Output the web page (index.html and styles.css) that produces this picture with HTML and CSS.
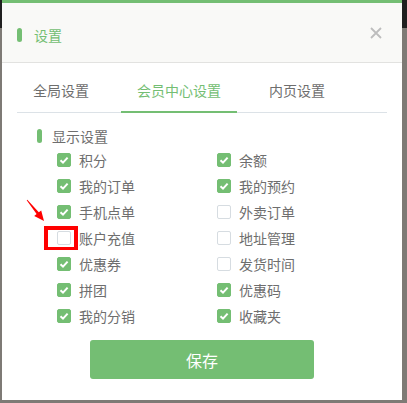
FILE: index.html
```html
<!DOCTYPE html>
<html lang="zh">
<head>
<meta charset="utf-8">
<link rel="stylesheet" href="styles.css">
</head>
<body>
<div class="dialog">
  <div class="header">
    <div class="title-group">
      <span class="pill"></span>
      <span class="title">设置</span>
    </div>
    <svg class="close" width="12" height="12" viewBox="0 0 12 12"><path d="M1 1L11 11M11 1L1 11" stroke="#bdbdbd" stroke-width="1.8" fill="none"/></svg>
  </div>
  <div class="content">
    <div class="tabs">
      <div class="tab">全局设置</div>
      <div class="tab active">会员中心设置</div>
      <div class="tab">内页设置</div>
    </div>
    <div class="section-title"><span class="pill small"></span><span>显示设置</span></div>
    <div class="grid">
      <div class="item"><span class="cb on"><svg viewBox="0 0 14 14"><path d="M3.5 7.2L6 9.6L10.6 4.6" stroke="#fff" stroke-width="2" fill="none"/></svg></span><span>积分</span></div>
      <div class="item"><span class="cb on"><svg viewBox="0 0 14 14"><path d="M3.5 7.2L6 9.6L10.6 4.6" stroke="#fff" stroke-width="2" fill="none"/></svg></span><span>余额</span></div>
      <div class="item"><span class="cb on"><svg viewBox="0 0 14 14"><path d="M3.5 7.2L6 9.6L10.6 4.6" stroke="#fff" stroke-width="2" fill="none"/></svg></span><span>我的订单</span></div>
      <div class="item"><span class="cb on"><svg viewBox="0 0 14 14"><path d="M3.5 7.2L6 9.6L10.6 4.6" stroke="#fff" stroke-width="2" fill="none"/></svg></span><span>我的预约</span></div>
      <div class="item"><span class="cb on"><svg viewBox="0 0 14 14"><path d="M3.5 7.2L6 9.6L10.6 4.6" stroke="#fff" stroke-width="2" fill="none"/></svg></span><span>手机点单</span></div>
      <div class="item"><span class="cb"></span><span>外卖订单</span></div>
      <div class="item"><span class="cb marked"><span class="redbox"></span><svg class="arrow" width="22" height="26" viewBox="0 0 22 26"><polygon points="2.3,1.75 13.8,14.3 16.2,12.4 19,23 9.2,18 11.6,16.1 1.7,2.25" fill="#f00"/></svg></span><span>账户充值</span></div>
      <div class="item"><span class="cb"></span><span>地址管理</span></div>
      <div class="item"><span class="cb on"><svg viewBox="0 0 14 14"><path d="M3.5 7.2L6 9.6L10.6 4.6" stroke="#fff" stroke-width="2" fill="none"/></svg></span><span>优惠券</span></div>
      <div class="item"><span class="cb"></span><span>发货时间</span></div>
      <div class="item"><span class="cb on"><svg viewBox="0 0 14 14"><path d="M3.5 7.2L6 9.6L10.6 4.6" stroke="#fff" stroke-width="2" fill="none"/></svg></span><span>拼团</span></div>
      <div class="item"><span class="cb on"><svg viewBox="0 0 14 14"><path d="M3.5 7.2L6 9.6L10.6 4.6" stroke="#fff" stroke-width="2" fill="none"/></svg></span><span>优惠码</span></div>
      <div class="item"><span class="cb on"><svg viewBox="0 0 14 14"><path d="M3.5 7.2L6 9.6L10.6 4.6" stroke="#fff" stroke-width="2" fill="none"/></svg></span><span>我的分销</span></div>
      <div class="item"><span class="cb on"><svg viewBox="0 0 14 14"><path d="M3.5 7.2L6 9.6L10.6 4.6" stroke="#fff" stroke-width="2" fill="none"/></svg></span><span>收藏夹</span></div>
    </div>
    <button class="save">保存</button>
  </div>
</div>
</body>
</html>
```

FILE: styles.css
```css
html, body {
  margin: 0;
  padding: 0;
}
body {
  width: 407px;
  height: 403px;
  overflow: hidden;
  background: linear-gradient(#1f1f1f 0, #1f1f1f 28px, #7e7a75 28px, #7e7a75 100%);
  font-family: "Noto Sans CJK SC", "Microsoft YaHei", sans-serif;
  font-size: 14px;
  color: #6e6e6e;
}
.dialog {
  margin-left: 2px;
  width: 400px;
  height: 400px;
  box-sizing: border-box;
  border-top: 3px solid #74be73;
  background: #fff;
}
.header {
  height: 59px;
  background: #f9f9f7;
  border-bottom: 1px solid #e2e2e0;
  display: flex;
  align-items: center;
  justify-content: space-between;
  padding: 0 20px 0 15px;
}
.title-group {
  display: flex;
  align-items: center;
  gap: 12px;
  margin-top: 4px;
}
.pill {
  display: inline-block;
  width: 5px;
  height: 14px;
  border-radius: 3px;
  background: #74be73;
}
.title {
  color: #74be73;
  font-size: 14px;
  line-height: 20px;
}
.close {
  display: block;
}
.content {
  padding: 0 15px;
}
.tabs {
  display: flex;
  gap: 16px;
  border-bottom: 1px solid #dce2e7;
}
.tab {
  padding: 17px 16px 11px;
  line-height: 20px;
  border-bottom: 2px solid transparent;
  margin-bottom: -1px;
}
.tab.active {
  color: #74be73;
  border-bottom-color: #74be73;
}
.section-title {
  margin-top: 13px;
  padding-left: 20px;
  display: flex;
  align-items: center;
  gap: 10px;
  line-height: 20px;
}
.grid {
  margin-top: 1px;
  padding-left: 40px;
  display: grid;
  grid-template-columns: 160px 160px;
  grid-auto-rows: 26px;
}
.item {
  display: flex;
  align-items: center;
  gap: 8px;
  line-height: 20px;
}
.cb {
  position: relative;
  width: 14px;
  height: 14px;
  box-sizing: border-box;
  border: 1px solid #d6dce1;
  border-radius: 2px;
  background: #fff;
  flex: none;
}
.cb.on {
  background: #74be73;
  border-color: #74be73;
}
.cb svg {
  position: absolute;
  left: -1px;
  top: -1px;
  width: 14px;
  height: 14px;
}
.cb .arrow {
  left: -33px;
  top: -34px;
  width: 22px;
  height: 26px;
}
.redbox {
  position: absolute;
  left: -14px;
  top: -6px;
  width: 34px;
  height: 24px;
  box-sizing: border-box;
  border: 4px solid #f00;
  border-bottom-width: 3px;
}
.save {
  display: block;
  margin: 11px auto 0;
  width: 224px;
  height: 39px;
  border: none;
  border-radius: 3px;
  background: #74be73;
  color: #fff;
  font-family: "Noto Sans CJK SC", sans-serif;
  font-size: 16px;
  padding: 0;
}
```
